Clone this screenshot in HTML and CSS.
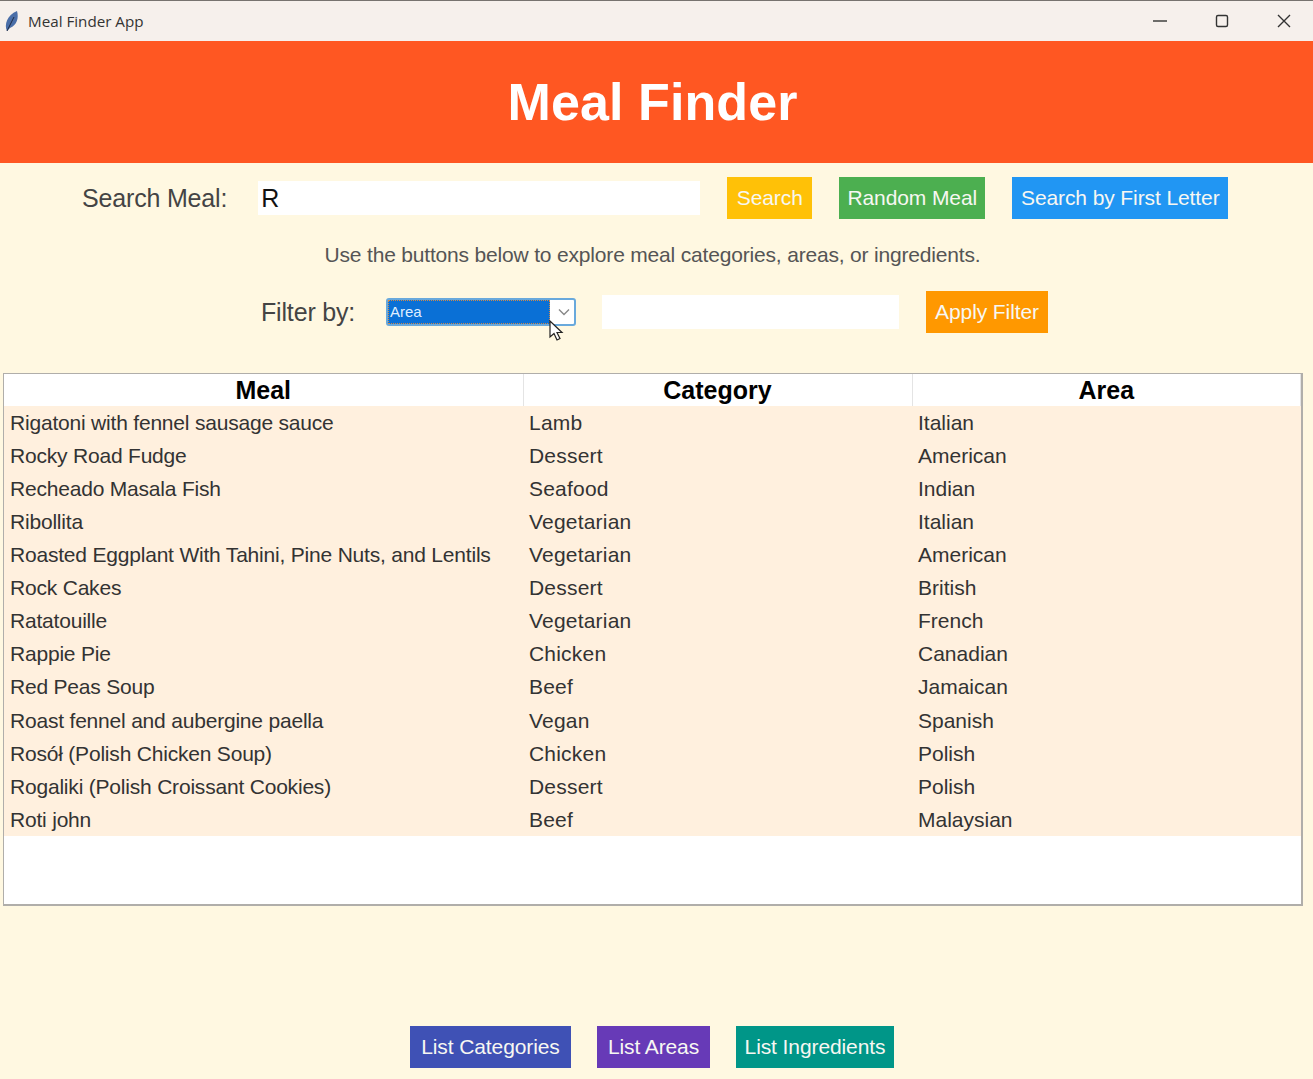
FILE: index.html
```html
<!DOCTYPE html>
<html lang="en">
<head>
    <meta charset="UTF-8" />
    <title>Meal Finder App</title>
    <link rel="stylesheet" href="styles.css">
</head>
<body>

    <div class="titlebar">
        <svg class="app-icon" width="18" height="22" viewBox="0 0 18 22">
            <path d="M4 21 C1 15 4 5 14 1 C16 8 14 15 7 18 Z" fill="#4a6ea8" />
            <path d="M4 21 L11 7" stroke="#1d2a44" stroke-width="1" fill="none" />
        </svg>
        <span class="app-name">Meal Finder App</span>
        <div class="win-controls">
            <svg width="16" height="16" viewBox="0 0 16 16"><path d="M1 8 H15" stroke="#333" stroke-width="1.4" /></svg>
            <svg width="16" height="16" viewBox="0 0 16 16"><rect x="2.5" y="2.5" width="11" height="11" rx="1.5" fill="none" stroke="#333" stroke-width="1.4" /></svg>
            <svg width="16" height="16" viewBox="0 0 16 16"><path d="M2 2 L14 14 M14 2 L2 14" stroke="#333" stroke-width="1.4" /></svg>
        </div>
    </div>

    <div class="header">
        <h1>Meal Finder</h1>
    </div>

    <div class="search-row">
        <label class="field-label">Search Meal:</label>
        <input type="text" class="search-input" value="R" />
        <button class="btn btn-yellow">Search</button>
        <button class="btn btn-green">Random Meal</button>
        <button class="btn btn-blue">Search by First Letter</button>
    </div>

    <p class="hint">Use the buttons below to explore meal categories, areas, or ingredients.</p>

    <div class="filter-row">
        <label class="field-label">Filter by:</label>
        <div class="combo">
            <span class="combo-value">Area</span>
            <span class="combo-arrow">
                <svg width="12" height="8" viewBox="0 0 12 8"><path d="M1 1.5 L6 6.5 L11 1.5" fill="none" stroke="#888" stroke-width="1.4" /></svg>
            </span>
            <svg class="cursor" width="16" height="22" viewBox="0 0 16 22">
                <path d="M1 1 V17 L5 13.5 L8 20 L11 18.5 L8 12.5 H13 Z" fill="#fff" stroke="#222" stroke-width="1.2" />
            </svg>
        </div>
        <input type="text" class="filter-input" />
        <button class="btn btn-orange">Apply Filter</button>
    </div>

    <div class="table-box">
        <table class="meals">
            <thead>
                <tr><th>Meal</th><th>Category</th><th>Area</th></tr>
            </thead>
            <tbody>
                <tr><td>Rigatoni with fennel sausage sauce</td><td>Lamb</td><td>Italian</td></tr>
                <tr><td>Rocky Road Fudge</td><td>Dessert</td><td>American</td></tr>
                <tr><td>Recheado Masala Fish</td><td>Seafood</td><td>Indian</td></tr>
                <tr><td>Ribollita</td><td>Vegetarian</td><td>Italian</td></tr>
                <tr><td>Roasted Eggplant With Tahini, Pine Nuts, and Lentils</td><td>Vegetarian</td><td>American</td></tr>
                <tr><td>Rock Cakes</td><td>Dessert</td><td>British</td></tr>
                <tr><td>Ratatouille</td><td>Vegetarian</td><td>French</td></tr>
                <tr><td>Rappie Pie</td><td>Chicken</td><td>Canadian</td></tr>
                <tr><td>Red Peas Soup</td><td>Beef</td><td>Jamaican</td></tr>
                <tr><td>Roast fennel and aubergine paella</td><td>Vegan</td><td>Spanish</td></tr>
                <tr><td>Rosół (Polish Chicken Soup)</td><td>Chicken</td><td>Polish</td></tr>
                <tr><td>Rogaliki (Polish Croissant Cookies)</td><td>Dessert</td><td>Polish</td></tr>
                <tr><td>Roti john</td><td>Beef</td><td>Malaysian</td></tr>
            </tbody>
        </table>
    </div>

    <div class="bottom-row">
        <button class="btn btn-indigo">List Categories</button>
        <button class="btn btn-purple">List Areas</button>
        <button class="btn btn-teal">List Ingredients</button>
    </div>

</body>
</html>
```

FILE: styles.css
```css
* {
    box-sizing: border-box;
}

html, body {
    height: 100%;
}

body {
    font-family: "Liberation Sans", Arial, sans-serif;
    background: #fff8e1;
    margin: 0;
    display: flex;
    flex-direction: column;
    color: #333;
    overflow: hidden;
}

.titlebar {
    height: 41px;
    flex: none;
    background: #f6f0ec;
    border-top: 1px solid #77736f;
    display: flex;
    align-items: center;
    padding-left: 3px;
}

.app-icon {
    margin-right: 7px;
}

.app-name {
    font-family: "Open Sans", sans-serif;
    font-size: 15.2px;
    color: #333;
}

.win-controls {
    margin-left: auto;
    display: flex;
    gap: 46px;
    padding-right: 21px;
}

.header {
    height: 122px;
    flex: none;
    background: #ff5722;
    display: flex;
    align-items: center;
    justify-content: center;
    padding-right: 8px;
}

.header h1 {
    margin: 0;
    font-size: 52px;
    letter-spacing: 0.1px;
    font-weight: bold;
    color: #fff;
}

.search-row {
    flex: none;
    display: flex;
    align-items: center;
    margin-top: 14px;
    padding-left: 82px;
}

.field-label {
    font-size: 25px;
    letter-spacing: -0.17px;
    color: #444;
}

.search-input {
    width: 442px;
    height: 34px;
    margin: 0 27px 0 31px;
    padding: 0 3px;
    border: none;
    background: #fff;
    font-family: inherit;
    font-size: 25px;
    color: #111;
}

.btn {
    height: 42px;
    padding: 0;
    border: none;
    font-family: inherit;
    font-size: 21px;
    letter-spacing: -0.1px;
    white-space: nowrap;
    color: #f7f7f2;
}

.search-row .btn {
    margin-right: 27px;
}

.btn-yellow { background: #ffc107; width: 85px; }
.btn-green { background: #4caf50; width: 146px; }
.btn-blue { background: #2196f3; width: 216px; }
.btn-orange { background: #ff9800; width: 122px; }
.btn-indigo { background: #3f51b5; width: 161px; }
.btn-purple { background: #673ab7; width: 113px; }
.btn-teal { background: #009688; width: 158px; }

.hint {
    flex: none;
    margin: 24px 0 0;
    padding-right: 8px;
    text-align: center;
    font-size: 21px;
    letter-spacing: -0.18px;
    line-height: 24px;
    color: #555;
}

.filter-row {
    flex: none;
    display: flex;
    align-items: center;
    margin-top: 24px;
    padding-left: 261px;
}

.filter-row .field-label {
    width: 125px;
}

.combo {
    position: relative;
    width: 190px;
    height: 28px;
    display: flex;
    border: 2px solid #69a9dc;
    border-radius: 3px;
    background: #fff;
}

.combo-value {
    flex: 1;
    background: #0a70d6;
    border: 1px dotted #d08a4a;
    color: #dfeeff;
    font-size: 15px;
    line-height: 22px;
    padding-left: 1px;
}

.combo-arrow {
    width: 24px;
    padding-left: 3px;
    display: flex;
    align-items: center;
    justify-content: center;
}

.cursor {
    position: absolute;
    left: 161px;
    top: 20px;
}

.filter-input {
    width: 297px;
    height: 34px;
    margin: 0 27px 0 26px;
    border: none;
    background: #fff;
}

.table-box {
    flex: none;
    height: 533px;
    margin: 40px 10px 0 3px;
    background: #fff;
    border: 2px solid #b0aeaa;
    border-width: 1px 2px 2px 1px;
}

.meals {
    width: 100%;
    table-layout: fixed;
    border-collapse: collapse;
}

.meals th:nth-child(1) { width: 519px; }
.meals th:nth-child(2) { width: 389px; }

.meals th {
    height: 32px;
    padding: 0;
    font-size: 25px;
    font-weight: bold;
    color: #000;
    text-align: center;
    border-right: 1px solid #e4e4e4;
}

.meals td {
    height: 33px;
    padding: 0 0 0 6px;
    background: #fff0de;
    font-size: 21px;
    color: #333;
    white-space: nowrap;
}

.meals td:first-child {
    letter-spacing: -0.2px;
}

.meals td:nth-child(2) {
    letter-spacing: 0.2px;
}

.meals tr:nth-child(9) td {
    height: 34px;
    padding-bottom: 1px;
}

.bottom-row {
    margin-top: auto;
    padding: 0 9px 11px 0;
    display: flex;
    justify-content: center;
    gap: 26px;
}
```
